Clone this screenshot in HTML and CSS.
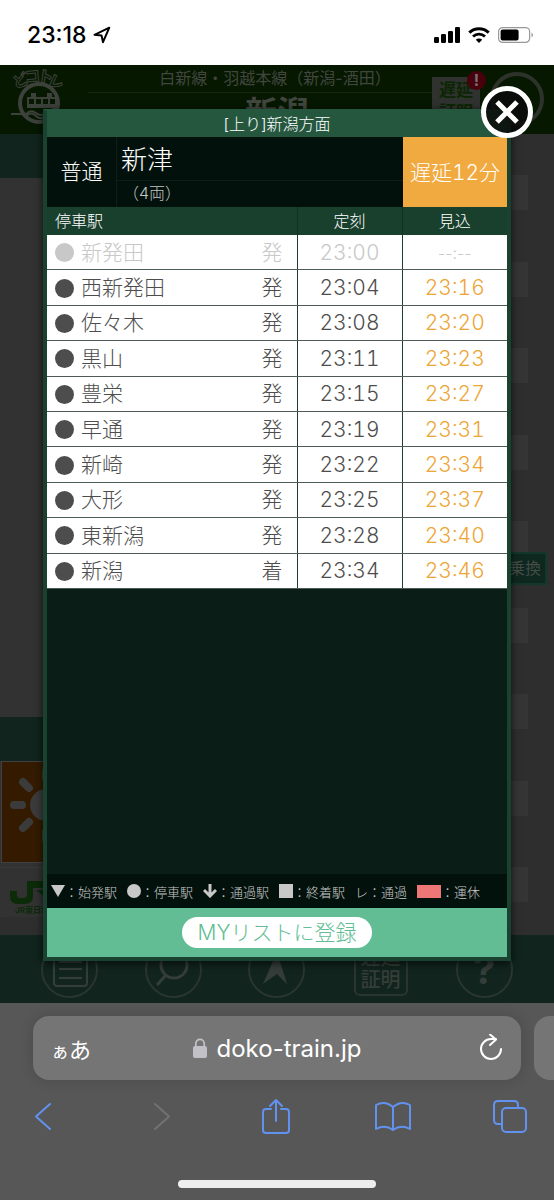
FILE: index.html
```html
<!DOCTYPE html>
<html lang="ja">
<head>
    <meta charset="UTF-8">
    <meta name="viewport" content="width=device-width, initial-scale=1.0">
    <title>どこトレ</title>

    <link rel="stylesheet" href="styles.css">
</head>
<body>

    <!-- Status bar -->
    <div class="status-bar">
        <span class="clock">23:18</span>
        <svg class="location" width="18" height="18" viewBox="0 0 18 18">
            <path d="M1.5 8.8 L16.3 1.7 L10 16.2 L8.6 9.6 Z" fill="none" stroke="#000" stroke-width="2" stroke-linejoin="round"/>
        </svg>
        <div class="status-icons">
            <svg width="26" height="16" viewBox="0 0 26 16">
                <rect x="0" y="10" width="5" height="6" rx="1.3"/>
                <rect x="7" y="7" width="5" height="9" rx="1.3"/>
                <rect x="14" y="4" width="5" height="12" rx="1.3"/>
                <rect x="21" y="0" width="5" height="16" rx="1.3"/>
            </svg>
            <svg width="22" height="16" viewBox="0 0 22 16">
                <path d="M1.3 5.6 A14 14 0 0 1 20.7 5.6" fill="none" stroke="#000" stroke-width="3"/>
                <path d="M5 9.6 A8.7 8.7 0 0 1 17 9.6" fill="none" stroke="#000" stroke-width="2.8"/>
                <path d="M11 16 L7.8 12.7 A4.6 4.6 0 0 1 14.2 12.7 Z"/>
            </svg>
            <svg width="36" height="16" viewBox="0 0 36 16">
                <rect x="0.6" y="0.6" width="31" height="14.8" rx="4" fill="none" stroke="#999" stroke-width="1.2"/>
                <rect x="2.6" y="2.6" width="18" height="10.8" rx="2"/>
                <path d="M33.5 5.5 Q36.5 8 33.5 10.5 Z" fill="#999"/>
            </svg>
        </div>
    </div>

    <div class="screen">

        <!-- Page behind the modal -->
        <div class="page">
            <header class="page-header">
                <svg class="logo" width="66" height="66" viewBox="0 0 66 66">
                    <circle cx="39" cy="38" r="19" fill="none" stroke="#3d413b" stroke-width="4"/>
                    <path d="M27 32 H57 V43 H27 Z M31 28 H36 V32 H31 Z M47 28 H52 V32 H47 Z" fill="#3d413b"/>
                    <path d="M29 34 h5 v5 h-5 Z M36 34 h5 v5 h-5 Z M43 34 h5 v5 h-5 Z M50 34 h5 v5 h-5 Z" fill="#061800"/>
                    <path d="M11 49 H26 Q31 44 36 48 T46 48 Q52 44 59 42" fill="none" stroke="#3d413b" stroke-width="2"/>
                    <path d="M26 51 Q31 46 36 51 T47 50" fill="none" stroke="#3d413b" stroke-width="2"/>
                    <g class="logo-text">
                        <text x="13" y="22" transform="rotate(-22 18 16)">ど</text>
                        <text x="25" y="17" transform="rotate(-6 31 12)">コ</text>
                        <text x="38" y="17" transform="rotate(8 44 12)">ト</text>
                        <text x="49" y="22" transform="rotate(24 55 16)">レ</text>
                    </g>
                </svg>
                <div class="page-title">
                    <p class="line-name">白新線・羽越本線（新潟-酒田）</p>
                    <h1>新潟</h1>
                </div>
                <button class="certificate">遅延<br>証明<span class="alert">!</span></button>
                <button class="round-button" aria-label="更新"></button>
            </header>

            <div class="page-body">
                <div class="side">
                    <div class="side-strip"></div>
                    <div class="side-space"></div>
                    <div class="side-strip"></div>
                    <div class="weather">
                        <svg width="84" height="100" viewBox="0 0 84 100">
                            <circle cx="43" cy="43" r="16" fill="#3b3b3b"/>
                            <g stroke="#3b3b3b" stroke-width="8" stroke-linecap="round">
                                <path d="M11 43 H19 M20 20 L26 26 M20 66 L26 60 M43 9 V16 M43 70 V77 M66 20 L60 26 M66 66 L60 60 M67 43 H75"/>
                            </g>
                        </svg>
                    </div>
                    <div class="jr">
                        <svg width="60" height="24" viewBox="0 0 60 24">
                            <path d="M17 0 H60 V7 H23 V15 Q23 23 15 23 H8 Q0 23 0 15 V10 H7 V14 Q7 17 10 17 H13 Q17 17 17 13 Z" fill="#0b2b09"/>
                            <path d="M26 9 L44 23 V9 Z" fill="#0b2b09"/>
                        </svg>
                        <span>JR東日本</span>
                    </div>
                </div>
                <div class="track">
                    <i></i><i></i><i></i><i></i><i></i><i></i><i></i><i></i><i></i>
                    <span class="transfer">乗換</span>
                </div>
            </div>

            <nav class="page-nav">
                <button class="nav-icon" aria-label="メニュー">
                    <svg width="36" height="36" viewBox="0 0 36 36">
                        <rect x="2" y="2" width="33" height="33" rx="3" fill="none" stroke-width="2"/>
                        <path d="M7 11 H30 M7 18 H30 M7 27 H30" fill="none" stroke-width="2"/>
                    </svg>
                </button>
                <button class="nav-icon" aria-label="検索">
                    <svg width="36" height="36" viewBox="0 0 36 36">
                        <circle cx="19" cy="14" r="13" fill="none" stroke-width="3"/>
                        <path d="M11 24 L2 34" fill="none" stroke-width="3"/>
                    </svg>
                </button>
                <button class="nav-icon" aria-label="現在地">
                    <svg width="36" height="36" viewBox="0 0 36 36">
                        <path d="M18 1 L28 33 L18 23 L4 33 Z" fill="#353d3a" stroke="none"/>
                    </svg>
                </button>
                <button class="nav-icon nav-square">遅延<br>証明</button>
                <button class="nav-icon nav-help">?</button>
            </nav>
        </div>

        <!-- Train detail modal -->
        <section class="modal">
            <button class="close" aria-label="閉じる">
                <svg width="24" height="24" viewBox="0 0 24 24">
                    <path d="M2 2 L22 22 M22 2 L2 22" fill="none" stroke="#fff" stroke-width="5"/>
                </svg>
            </button>
            <h2>[上り]新潟方面</h2>
            <div class="train">
                <div class="train-type">普通</div>
                <div class="train-info">
                    <div class="destination">新津</div>
                    <div class="cars">（4両）</div>
                </div>
                <div class="delay">遅延12分</div>
            </div>

            <table class="timetable">
                <thead>
                    <tr><th class="station-col">停車駅</th><th class="time-col">定刻</th><th class="time-col">見込</th></tr>
                </thead>
                <tbody>
                    <tr class="passed"><td><div class="station"><i class="dot"></i>新発田<span>発</span></div></td><td>23:00</td><td class="estimate no-time">--:--</td></tr>
                    <tr><td><div class="station"><i class="dot"></i>西新発田<span>発</span></div></td><td>23:04</td><td class="estimate">23:16</td></tr>
                    <tr><td><div class="station"><i class="dot"></i>佐々木<span>発</span></div></td><td>23:08</td><td class="estimate">23:20</td></tr>
                    <tr><td><div class="station"><i class="dot"></i>黒山<span>発</span></div></td><td>23:11</td><td class="estimate">23:23</td></tr>
                    <tr><td><div class="station"><i class="dot"></i>豊栄<span>発</span></div></td><td>23:15</td><td class="estimate">23:27</td></tr>
                    <tr><td><div class="station"><i class="dot"></i>早通<span>発</span></div></td><td>23:19</td><td class="estimate">23:31</td></tr>
                    <tr><td><div class="station"><i class="dot"></i>新崎<span>発</span></div></td><td>23:22</td><td class="estimate">23:34</td></tr>
                    <tr><td><div class="station"><i class="dot"></i>大形<span>発</span></div></td><td>23:25</td><td class="estimate">23:37</td></tr>
                    <tr><td><div class="station"><i class="dot"></i>東新潟<span>発</span></div></td><td>23:28</td><td class="estimate">23:40</td></tr>
                    <tr><td><div class="station"><i class="dot"></i>新潟<span>着</span></div></td><td>23:34</td><td class="estimate">23:46</td></tr>
                </tbody>
            </table>

            <ul class="legend">
                <li><svg width="14" height="14" viewBox="0 0 14 14"><path d="M0 1 H14 L7 13 Z" fill="#c8c8c8"/></svg>：始発駅</li>
                <li><svg width="14" height="14" viewBox="0 0 14 14"><circle cx="7" cy="7" r="7" fill="#c8c8c8"/></svg>：停車駅</li>
                <li><svg width="14" height="14" viewBox="0 0 14 14"><path d="M7 0 V11 M1 6 L7 12 L13 6" fill="none" stroke="#c8c8c8" stroke-width="3"/></svg>：通過駅</li>
                <li><svg width="14" height="14" viewBox="0 0 14 14"><rect width="14" height="14" fill="#c8c8c8"/></svg>：終着駅</li>
                <li>レ：通過</li>
                <li><i class="cancelled"></i>：運休</li>
            </ul>

            <div class="modal-footer">
                <button class="my-list">MYリストに登録</button>
            </div>
        </section>
    </div>

    <!-- Browser toolbar -->
    <footer class="browser">
        <div class="tabs">
            <div class="address">
                <button class="text-size"><small>ぁ</small>あ</button>
                <div class="url">
                    <svg width="14" height="20" viewBox="0 0 14 20">
                        <rect x="0" y="8" width="14" height="12" rx="2" fill="#c2c1c8"/>
                        <path d="M2.8 9 V5.5 A4.2 4.2 0 0 1 11.2 5.5 V9" fill="none" stroke="#c2c1c8" stroke-width="1.7"/>
                    </svg>
                    doko-train.jp
                </div>
                <button class="reload" aria-label="再読み込み">
                    <svg width="24" height="28" viewBox="0 0 24 28">
                        <path d="M22 15 A10 10 0 1 1 12 5 H17 M11 0.500 L17 5.500 L11 11" fill="none" stroke="#fff" stroke-width="2" stroke-linecap="round" stroke-linejoin="round"/>
                    </svg>
                </button>
            </div>
            <div class="next-tab"></div>
        </div>
        <div class="toolbar">
            <button aria-label="戻る"><svg width="34" height="36" viewBox="0 0 34 36"><path d="M24 6 L10 18.500 L24 31" /></svg></button>
            <button class="disabled" aria-label="進む" disabled><svg width="34" height="36" viewBox="0 0 34 36"><path d="M13 6 L27 18.500 L13 31" /></svg></button>
            <button aria-label="共有"><svg width="34" height="36" viewBox="0 0 34 36"><path d="M12 11 H7 Q4 11 4 14 V32 Q4 35 7 35 H27 Q30 35 30 32 V14 Q30 11 27 11 H22 M17 23 V2 M11 8 L17 2 L23 8" /></svg></button>
            <button aria-label="ブックマーク"><svg width="36" height="36" viewBox="0 0 36 36"><path d="M18 9 Q10 2 1 7 V31 Q10 26 18 32 Q26 26 35 31 V7 Q26 2 18 9 V32" /></svg></button>
            <button aria-label="タブ"><svg width="34" height="36" viewBox="0 0 34 36"><rect x="9" y="10" width="24" height="24" rx="4"/><path d="M9 26 H5 Q1 26 1 22 V7 Q1 3 5 3 H21 Q25 3 25 7 V10" /></svg></button>
        </div>
        <div class="home-indicator"></div>
    </footer>

</body>
</html>
```
FILE: styles.css
```css
/* General Styles */
* {
    box-sizing: border-box;
}

body {
    font-family: Inter, "Noto Sans CJK JP", sans-serif;
    font-weight: 300;
    margin: 0;
    min-height: 100vh;
    display: flex;
    flex-direction: column;
    background: #2e2e2e;
}

h1, h2, p, ul {
    margin: 0;
    padding: 0;
}

button {
    font: inherit;
    color: inherit;
    background: none;
    border: none;
    padding: 0;
}

svg {
    display: block;
    flex: none;
}

/* Status bar */
.status-bar {
    display: flex;
    align-items: center;
    height: 65px;
    padding: 4px 20px 0 27px;
    background: #fff;
}

.clock {
    font-size: 23px;
    font-weight: 500;
}

.location {
    margin-left: 6px;
}

.status-icons {
    display: flex;
    gap: 8px;
    margin-left: auto;
}

/* Page and modal share one grid cell */
.screen {
    flex: 1;
    display: grid;
}

.page, .modal {
    grid-area: 1 / 1;
}

.page {
    display: flex;
    flex-direction: column;
    overflow: hidden;
}

/* Page header */
.page-header {
    display: flex;
    align-items: flex-start;
    height: 69px;
    padding-right: 10px;
    background: #061800;
    color: #41463f;
}

.logo {
    margin-right: 22px;
}

.logo-text {
    font-size: 15px;
    font-weight: 900;
    fill: #061800;
    stroke: #3d413b;
    stroke-width: 1;
}

.page-title {
    flex: 1;
    text-align: center;
}

.line-name {
    height: 28px;
    font-size: 16px;
    font-weight: 400;
    line-height: 26px;
    padding-left: 30px;
    border-bottom: 1px solid #18290f;
}

.page-title h1 {
    font-size: 32px;
    line-height: 40px;
    padding-left: 34px;
}

.certificate {
    position: relative;
    width: 48px;
    height: 48px;
    margin: 12px 10px 0 0;
    background: #2f322e;
    color: #0c2604;
    font-size: 17px;
    font-weight: 700;
    line-height: 22px;
}

.alert {
    position: absolute;
    top: -6px;
    right: -6px;
    width: 19px;
    height: 19px;
    border-radius: 50%;
    background: #48000c;
    color: #737373;
    font-size: 16px;
    line-height: 19px;
}

.round-button {
    width: 54px;
    height: 54px;
    margin-top: 7px;
    border: 4px solid #2d332b;
    border-radius: 50%;
}

/* Page body */
.page-body {
    flex: 1;
    display: flex;
}

.side {
    width: 40%;
    display: flex;
    flex-direction: column;
    background: #323232;
}

.side-strip {
    height: 44px;
    background: #11241d;
}

.side-space {
    flex: 1;
}

.weather {
    padding-left: 1px;
    margin: 0 0 4px 1px;
    border: 1px solid #404040;
    background: #341b00;
}

.jr {
    height: 68px;
    padding: 13px 0 0 10px;
    border-top: 1px solid #3b3b3b;
    border-bottom: 18px solid #2e2e2e;
    color: #0b2b09;
}

.jr span {
    display: block;
    padding-left: 5px;
    font-size: 8px;
    font-weight: 700;
    line-height: 10px;
}

.track {
    flex: 1;
    position: relative;
    display: flex;
    flex-direction: column;
    justify-content: space-between;
    padding: 41px 26px 33px 0;
    background: #2e2e2e;
}

.track i {
    height: 35px;
    background: #353535;
}

.transfer {
    position: absolute;
    right: 7px;
    top: 418px;
    padding: 0 4px;
    border: 2px solid #12382a;
    background: #0e281f;
    color: #454b48;
    font-size: 16px;
    font-weight: 400;
    line-height: 29px;
}

/* Page navigation */
.page-nav {
    display: grid;
    grid-template-columns: repeat(5, 1fr);
    place-items: center;
    height: 68px;
    padding: 0 18px;
    background: #11241d;
}

.nav-icon {
    display: flex;
    align-items: center;
    justify-content: center;
    width: 57px;
    height: 57px;
    border: 2px solid #2a3531;
    border-radius: 50%;
    color: #353d3a;
    stroke: #353d3a;
}

.nav-square {
    width: 54px;
    height: 54px;
    border-radius: 6px;
    font-size: 20px;
    font-weight: 500;
    line-height: 22px;
}

.nav-help {
    font-size: 40px;
    font-weight: 700;
}

/* Modal */
.modal {
    position: relative;
    display: flex;
    flex-direction: column;
    margin: 44px 43px 42px;
    border: 4px solid #194230;
    border-top: 2px solid #25573f;
    background: #0a1e17;
    color: #fff;
    box-shadow: 0 2px 8px rgba(0, 0, 0, 0.7);
}

.modal h2 {
    background: #25573f;
    font-size: 16px;
    font-weight: 300;
    line-height: 26px;
    text-align: center;
}

.close {
    position: absolute;
    top: -25px;
    right: -26px;
    display: flex;
    align-items: center;
    justify-content: center;
    width: 52px;
    height: 52px;
    border: 5px solid #fff;
    border-radius: 50%;
    background: rgba(10, 10, 10, 0.85);
}

.train {
    display: flex;
    height: 70px;
    background: #03110c;
    font-size: 21px;
}

.train-type {
    width: 70px;
    line-height: 70px;
    text-align: center;
    border-right: 1px solid #0d1f18;
}

.train-info {
    flex: 1;
}

.destination {
    height: 44px;
    padding-left: 4px;
    border-bottom: 1px solid #0d1f18;
    font-size: 26px;
    line-height: 45px;
}

.cars {
    padding-left: 6px;
    color: #c0c4c2;
    font-size: 16px;
    line-height: 25px;
}

.delay {
    width: 104px;
    background: #f1aa3f;
    font-variant-numeric: tabular-nums;
    line-height: 72px;
    text-align: center;
}

/* Timetable */
.timetable {
    width: 100%;
    height: 382px;
    table-layout: fixed;
    border-collapse: collapse;
    font-size: 21px;
    font-variant-numeric: tabular-nums;
    line-height: 28px;
}

.timetable th {
    height: 28px;
    padding: 0;
    background: #193f2d;
    border-right: 1px solid #12301f;
    font-size: 16px;
    font-weight: 300;
    line-height: 27px;
}

.timetable .station-col {
    padding-left: 8px;
    text-align: left;
}

.time-col {
    width: 105px;
}

.timetable td {
    padding: 1px 0 0;
    background: #fff;
    border-right: 1px solid #193f2d;
    border-bottom: 1px solid #4d5c55;
    color: #4d4d4d;
    text-align: center;
}

.timetable th:last-child, .timetable td:last-child {
    border-right: none;
}

.timetable .estimate {
    color: #eda535;
}

.station {
    display: flex;
    align-items: center;
    padding: 0 14px 0 8px;
}

.station span {
    margin-left: auto;
}

.dot {
    width: 19px;
    height: 19px;
    margin-right: 7px;
    border-radius: 50%;
    background: #4d4d4d;
}

.timetable .passed td {
    color: #c8c8c8;
}

.passed .dot {
    background: #c8c8c8;
}

.timetable .no-time {
    font-size: 16px;
    font-variant-numeric: normal;
}

/* Legend */
.legend {
    display: flex;
    align-items: center;
    gap: 10px;
    height: 34px;
    margin-top: auto;
    padding-left: 4px;
    background: #03110c;
    color: #c8c8c8;
    font-size: 13px;
    list-style: none;
    white-space: nowrap;
}

.legend li {
    display: flex;
    align-items: center;
}

.cancelled {
    width: 24px;
    height: 13px;
    background: #ed7777;
}

.modal-footer {
    display: flex;
    align-items: center;
    justify-content: center;
    height: 49px;
    background: #62bd94;
}

.my-list {
    height: 31px;
    padding: 0 16px;
    border-radius: 16px;
    background: #fff;
    color: #62bd94;
    font-size: 21px;
    line-height: 31px;
}

/* Browser toolbar */
.browser {
    height: 197px;
    padding-top: 13px;
    background: #575757;
    color: #fff;
    overflow: hidden;
}

.tabs {
    display: flex;
    gap: 13px;
    padding-left: 33px;
}

.address {
    flex: 1;
    display: grid;
    grid-template-columns: 1fr auto 1fr;
    align-items: center;
    height: 64px;
    padding: 0 18px;
    border-radius: 16px;
    background: #757575;
    box-shadow: 0 0 14px rgba(0, 0, 0, 0.15);
}

.text-size {
    justify-self: start;
    font-size: 22px;
    font-weight: 400;
}

.text-size small {
    font-size: 18px;
}

.url {
    display: flex;
    align-items: center;
    gap: 10px;
    font-size: 24px;
    font-weight: 400;
}

.reload {
    justify-self: end;
}

.next-tab {
    width: 20px;
    height: 64px;
    border-radius: 16px 0 0 16px;
    background: #757575;
}

.toolbar {
    display: flex;
    justify-content: space-between;
    padding: 18px 27px 0 26px;
}

.toolbar svg {
    fill: none;
    stroke: #6292ef;
    stroke-width: 2;
    stroke-linecap: round;
    stroke-linejoin: round;
}

.toolbar .disabled svg {
    stroke: #727272;
}

.home-indicator {
    width: 198px;
    height: 8px;
    margin: 46px auto 0;
    border-radius: 4px;
    background: #eee;
}
```
